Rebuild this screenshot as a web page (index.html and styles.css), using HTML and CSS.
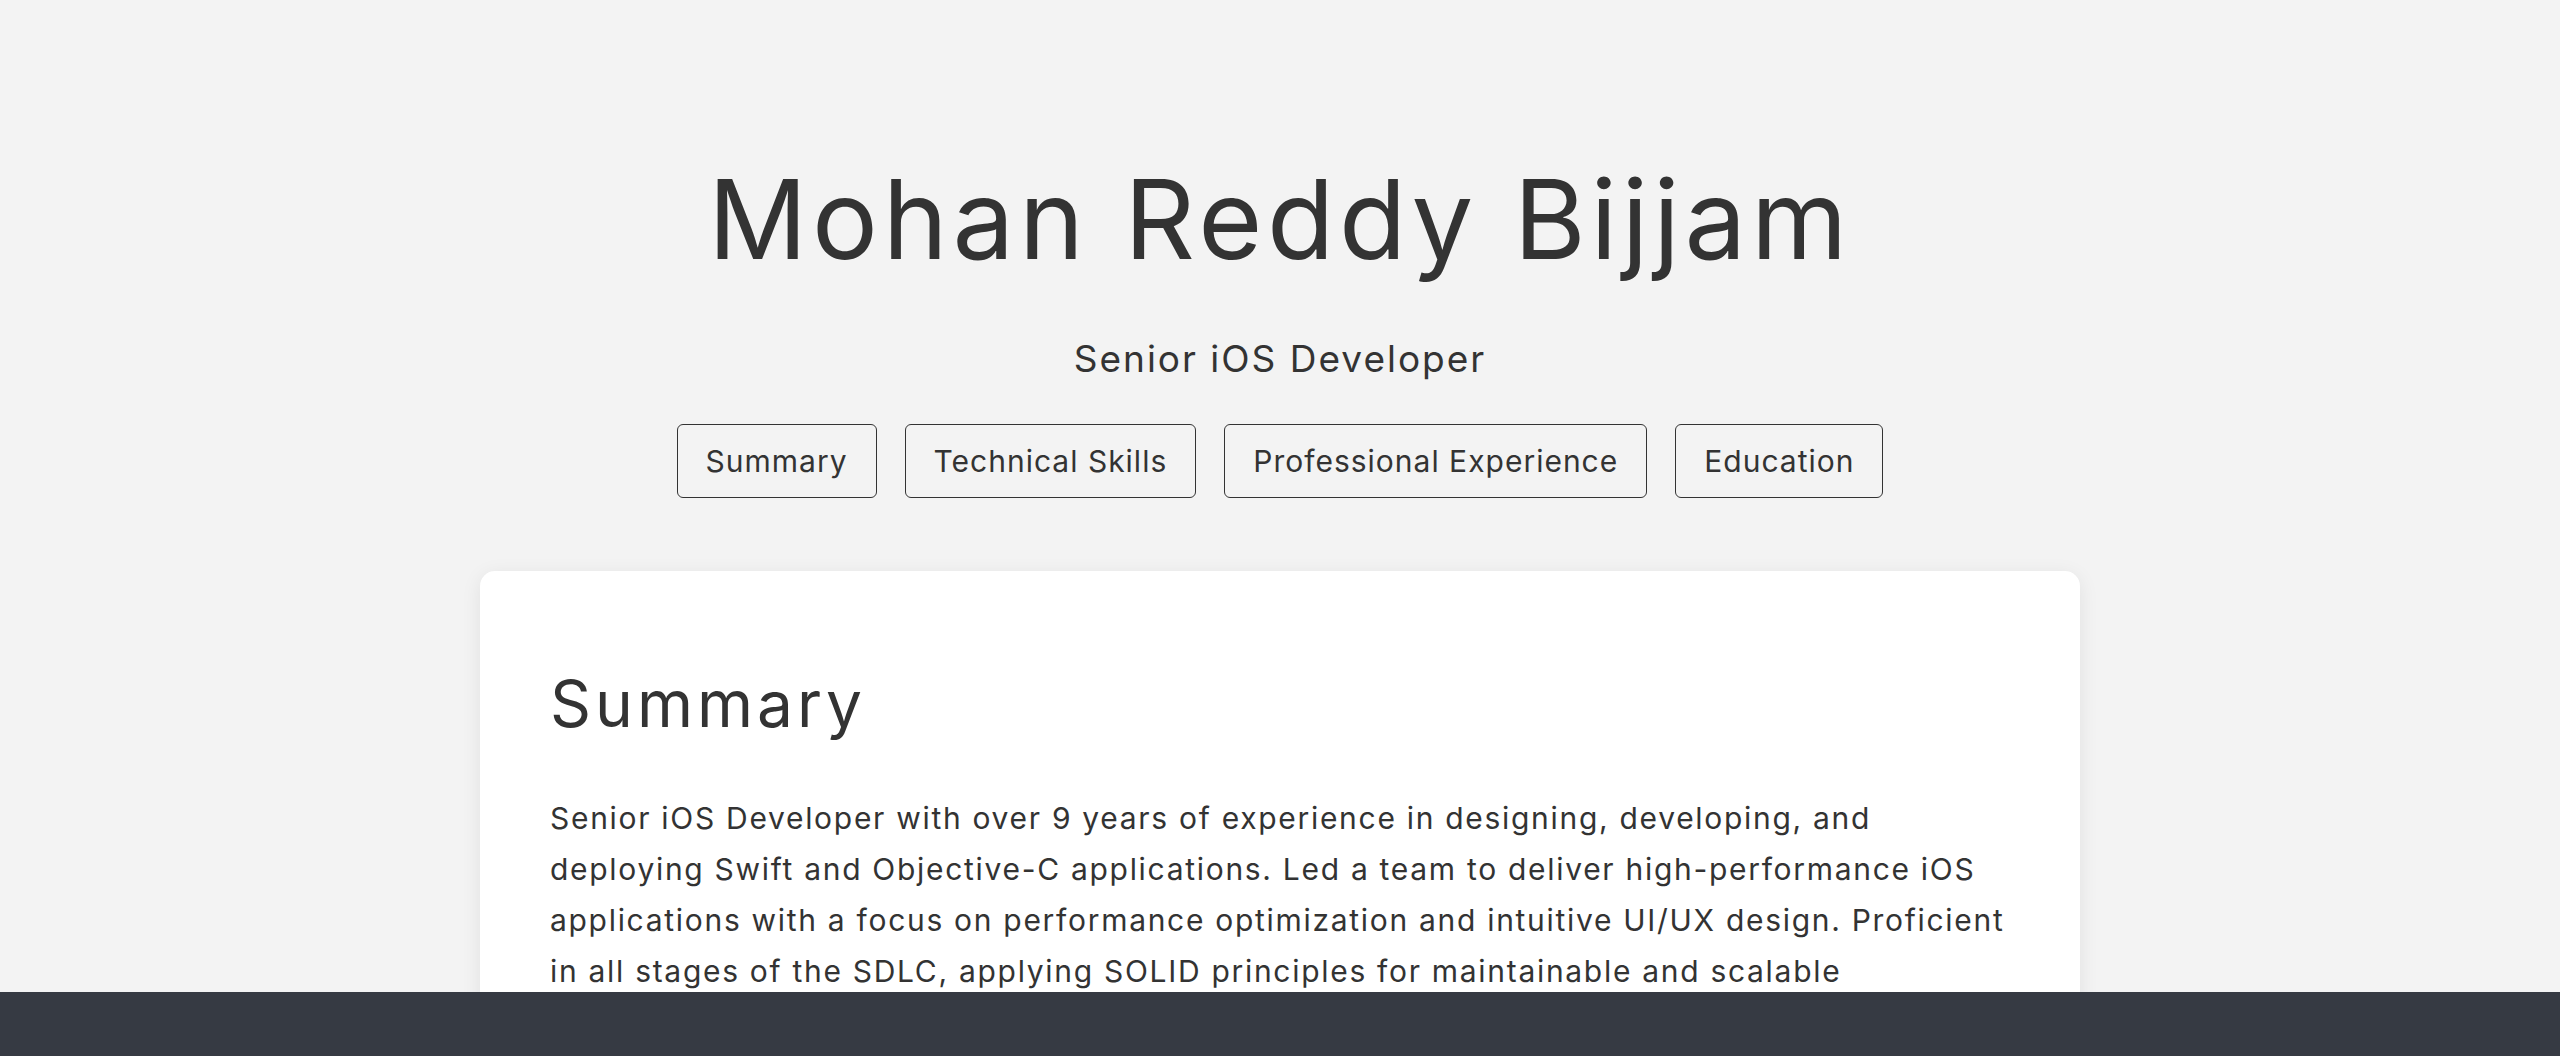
FILE: index.html
```html
<!DOCTYPE html>
<html lang="en">
<head>
<meta charset="utf-8">
<title>Mohan Reddy Bijjam</title>
<link rel="stylesheet" href="styles.css">
</head>
<body>
<header class="hero">
  <h1 class="hero-name">Mohan Reddy Bijjam</h1>
  <p class="hero-role">Senior iOS Developer</p>
  <nav class="nav">
    <a class="nav-btn" href="#summary">Summary</a>
    <a class="nav-btn" href="#skills">Technical Skills</a>
    <a class="nav-btn" href="#experience">Professional Experience</a>
    <a class="nav-btn" href="#education">Education</a>
  </nav>
</header>
<main class="content">
  <section class="card" id="summary">
    <h2 class="card-title">Summary</h2>
    <p class="card-text">Senior iOS Developer with over 9 years of experience in designing, developing, and<br>
deploying Swift and Objective-C applications. Led a team to deliver high-performance iOS<br>
applications with a focus on performance optimization and intuitive UI/UX design. Proficient<br>
in all stages of the SDLC, applying SOLID principles for maintainable and scalable<br>
applications, with hands-on experience in MVVM, VIPER and Clean Architecture.</p>
  </section>
</main>
<footer class="footer"></footer>
</body>
</html>
```
FILE: styles.css
```css
* { box-sizing: border-box; }
html, body { margin: 0; padding: 0; }
body {
  background: #f3f3f3;
  color: #333333;
  font-family: Inter, "Noto Sans", "DejaVu Sans", sans-serif;
  padding-bottom: 64px;
}
.hero {
  display: flex;
  flex-direction: column;
  align-items: center;
  padding-top: 153px;
}
.hero-name {
  margin: 0;
  font-size: 110px;
  font-weight: 400;
  line-height: 1.2;
  letter-spacing: 4.7px;
  color: #333;
}
.hero-role {
  margin: 52px 0 0;
  font-size: 37px;
  line-height: 1.2;
  letter-spacing: 2px;
  color: #333;
}
.nav {
  display: flex;
  gap: 28px;
  margin-top: 43px;
}
.nav-btn {
  display: block;
  padding: 18px 28px;
  border: 1px solid #333;
  border-radius: 6px;
  font-size: 30px;
  line-height: 36px;
  color: #333;
  text-decoration: none;
  letter-spacing: 1px;
}
.content {
  display: flex;
  justify-content: center;
  margin-top: 73px;
}
.card {
  width: 1600px;
  background: #ffffff;
  border-radius: 15px;
  box-shadow: 0 4px 20px rgba(0, 0, 0, 0.08);
  padding: 95px 70px 70px;
}
.card-title {
  margin: 0;
  font-size: 64px;
  font-weight: 400;
  line-height: 1.2;
  letter-spacing: 4px;
}
.card-text {
  margin: 50px 0 0;
  font-size: 30px;
  line-height: 51px;
  letter-spacing: 1.7px;
}
.footer {
  position: fixed;
  left: 0;
  right: 0;
  bottom: 0;
  height: 64px;
  background: #363a43;
}
```
